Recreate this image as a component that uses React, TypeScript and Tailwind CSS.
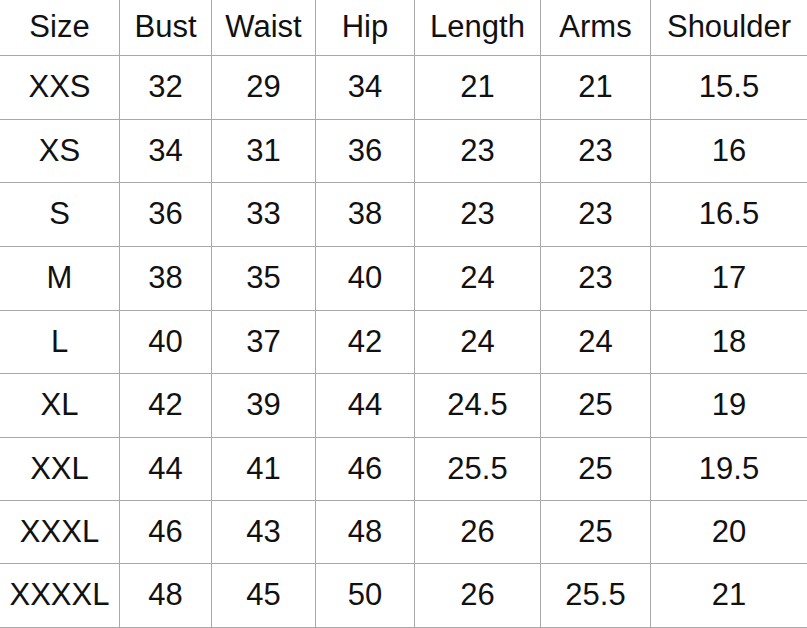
const headers = ['Size', 'Bust', 'Waist', 'Hip', 'Length', 'Arms', 'Shoulder'];

const rows = [
    ['XXS', '32', '29', '34', '21', '21', '15.5'],
    ['XS', '34', '31', '36', '23', '23', '16'],
    ['S', '36', '33', '38', '23', '23', '16.5'],
    ['M', '38', '35', '40', '24', '23', '17'],
    ['L', '40', '37', '42', '24', '24', '18'],
    ['XL', '42', '39', '44', '24.5', '25', '19'],
    ['XXL', '44', '41', '46', '25.5', '25', '19.5'],
    ['XXXL', '46', '43', '48', '26', '25', '20'],
    ['XXXXL', '48', '45', '50', '26', '25.5', '21'],
];

function Cell({ text, last }: { text: string; last: boolean }) {
    return (
        <div
            className={
                last
                    ? 'flex items-center justify-center border-b border-[#a9a9a9]'
                    : 'flex items-center justify-center border-b border-r border-[#a9a9a9]'
            }
        >
            {text}
        </div>
    );
}

export default function App() {
    return (
        <div className="w-[807px] h-[628px] bg-white overflow-hidden">
            <div
                className="grid grid-cols-[120px_92px_104px_99px_126px_110px_156px] grid-rows-[56px_64px_63px_64px_64px_63px_64px_63px_63px_64px] text-[31px] text-[#111] font-['Liberation_Sans',Arial,sans-serif]"
            >
                {headers.map((h, i) => (
                    <Cell key={h} text={h} last={i === headers.length - 1} />
                ))}
                {rows.map((r) =>
                    r.map((v, i) => <Cell key={r[0] + i} text={v} last={i === r.length - 1} />)
                )}
            </div>
        </div>
    );
}
